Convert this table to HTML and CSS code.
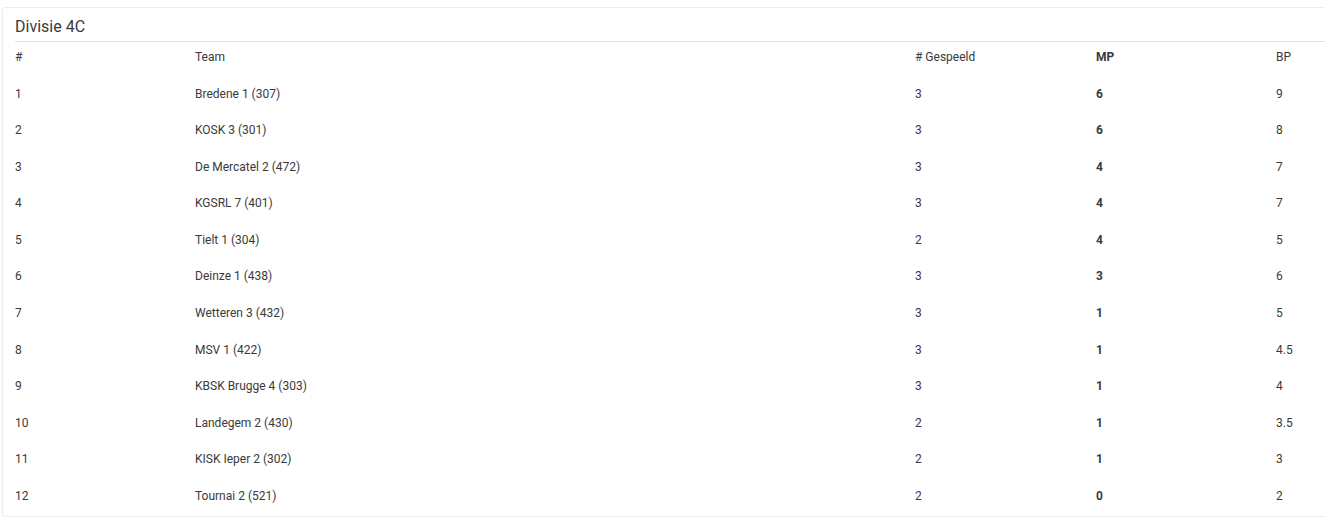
FILE: index.html
```html
<!DOCTYPE html>
<html lang="nl">
<head>
<meta charset="utf-8">
<title>Divisie 4C</title>
<link rel="stylesheet" href="styles.css">
</head>
<body>
<div class="card">
  <div class="card-title">Divisie 4C</div>
  <table class="standings">
    <colgroup>
      <col class="c-rank"><col class="c-team"><col class="c-played"><col class="c-mp"><col class="c-bp">
    </colgroup>
    <thead>
      <tr><th>#</th><th>Team</th><th># Gespeeld</th><th class="mp">MP</th><th>BP</th></tr>
    </thead>
    <tbody>
      <tr><td>1</td><td>Bredene 1 (307)</td><td>3</td><td class="mp">6</td><td>9</td></tr>
      <tr><td>2</td><td>KOSK 3 (301)</td><td>3</td><td class="mp">6</td><td>8</td></tr>
      <tr><td>3</td><td>De Mercatel 2 (472)</td><td>3</td><td class="mp">4</td><td>7</td></tr>
      <tr><td>4</td><td>KGSRL 7 (401)</td><td>3</td><td class="mp">4</td><td>7</td></tr>
      <tr><td>5</td><td>Tielt 1 (304)</td><td>2</td><td class="mp">4</td><td>5</td></tr>
      <tr><td>6</td><td>Deinze 1 (438)</td><td>3</td><td class="mp">3</td><td>6</td></tr>
      <tr><td>7</td><td>Wetteren 3 (432)</td><td>3</td><td class="mp">1</td><td>5</td></tr>
      <tr><td>8</td><td>MSV 1 (422)</td><td>3</td><td class="mp">1</td><td>4.5</td></tr>
      <tr><td>9</td><td>KBSK Brugge 4 (303)</td><td>3</td><td class="mp">1</td><td>4</td></tr>
      <tr><td>10</td><td>Landegem 2 (430)</td><td>2</td><td class="mp">1</td><td>3.5</td></tr>
      <tr><td>11</td><td>KISK Ieper 2 (302)</td><td>2</td><td class="mp">1</td><td>3</td></tr>
      <tr><td>12</td><td>Tournai 2 (521)</td><td>2</td><td class="mp">0</td><td>2</td></tr>
    </tbody>
  </table>
</div>
</body>
</html>
```
FILE: styles.css
```css
html, body {
  margin: 0;
  padding: 0;
  overflow: hidden;
  background: #fff;
}
body {
  font-family: Roboto, "Liberation Sans", Arial, sans-serif;
  color: #333;
}
.card {
  margin: 7px 0 0 2px;
  width: 1323px;
  height: 510px;
  box-sizing: border-box;
  border: 1px solid #eeeeee;
  border-right: none;
  border-radius: 4px 0 0 4px;
  box-shadow: 0 1px 2px rgba(0, 0, 0, 0.04);
  padding: 0 0 0 12px;
  overflow: hidden;
}
.card-title {
  font-size: 16px;
  line-height: 22px;
  padding: 8px 0 3px 0;
  border-bottom: 1px solid #e3e3e3;
  color: #3a3a3a;
}
.standings {
  border-collapse: collapse;
  table-layout: fixed;
  width: 1440px;
  font-size: 12px;
}
.c-rank { width: 180px; }
.c-team { width: 720px; }
.c-played { width: 181px; }
.c-mp { width: 180px; }
.c-bp { width: 179px; }
.standings tr {
  height: 36.58px;
}
.standings th,
.standings td {
  text-align: left;
  vertical-align: top;
  font-weight: normal;
  line-height: 14px;
  padding: 8px 0 0 0;
  color: #3a3a3a;
}
.standings .mp {
  font-weight: bold;
}
```
